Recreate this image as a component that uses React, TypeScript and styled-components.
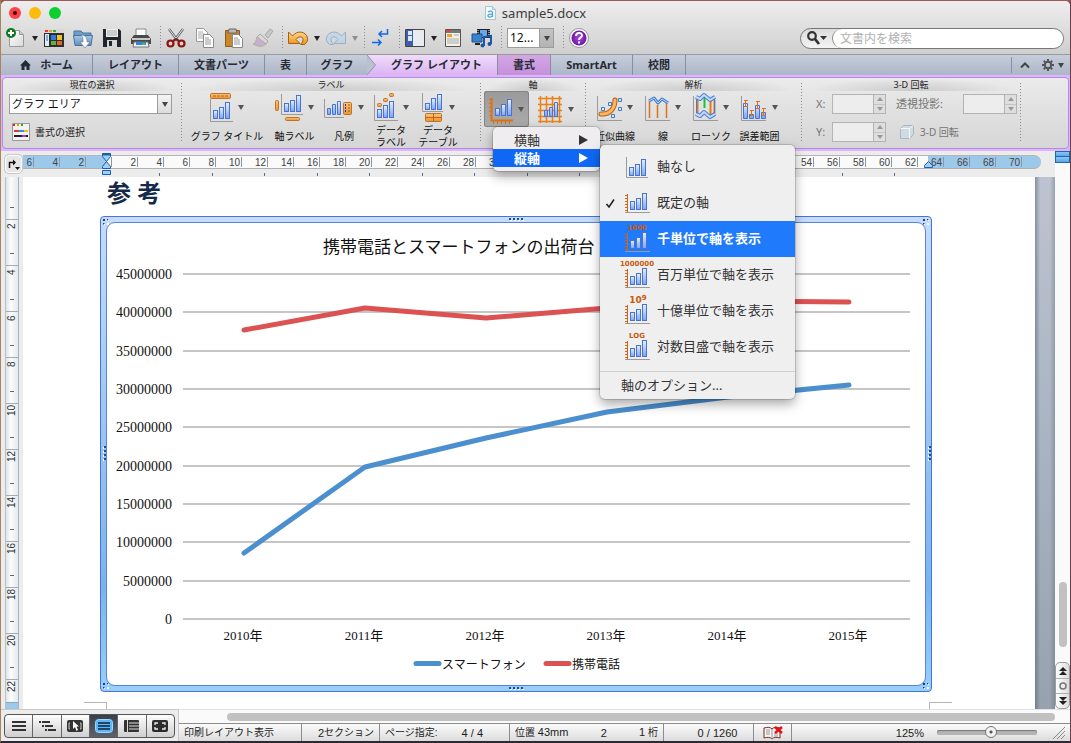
import React from "react";
import styled, { createGlobalStyle } from "styled-components";

const UI = `"Noto Sans", "Noto Sans CJK JP", sans-serif`;
const NUM = `"Liberation Sans", "Noto Sans CJK JP", sans-serif`;
const SERIF = `"Liberation Serif", "Noto Sans CJK JP", serif`;
const PURPLE = "#b888e6";

const Global = createGlobalStyle`
  *, *::before, *::after { box-sizing: border-box; }
  body { margin: 0; background: #3a2c30; font-family: ${UI}; color: #1c1c1c; }
  button, input, select { font: inherit; color: inherit; margin: 0; padding: 0; border: 0; background: none; border-radius: 0; outline: none; }
  svg { display: block; flex: none; overflow: visible; }
`;

/* ---------- window ---------- */

const Desktop = styled.div`
  display: flex;
  min-height: 100vh;
  border-style: solid;
  border-width: 1px 1px 2px 1px;
  border-color: #9a5a58 #6b3c4c #2c2a30 #a9855f;
  background: #8f5656;
`;

const Window = styled.div`
  flex: 1;
  min-width: 0;
  display: flex;
  flex-direction: column;
  border-radius: 5px 5px 0 0;
  background: #ececec;
`;

const Chrome = styled.header`
  background: linear-gradient(#ededed, #e2e2e2 40%, #cfcfcf);
  border-radius: 5px 5px 0 0;
  border-bottom: 1px solid #9a9a9a;
`;

const TitleBar = styled.div`
  display: grid;
  grid-template-columns: 1fr auto 1fr;
  align-items: center;
  height: 23px;
  padding: 0 8px;
`;

const Lights = styled.div`
  display: flex;
  gap: 8px;
`;

const Light = styled.button<{ $c: string }>`
  width: 12px;
  height: 12px;
  border-radius: 50%;
  background: ${(p) => p.$c};
  display: grid;
  place-items: center;
`;

const LightDot = styled.span`
  width: 4px;
  height: 4px;
  border-radius: 50%;
  background: #4d0000;
`;

const FileName = styled.h1`
  display: flex;
  align-items: center;
  gap: 6px;
  margin: 0;
  font-size: 13px;
  line-height: 22px;
  font-weight: 400;
  color: #3c3c3c;
`;

const Toolbar = styled.div`
  display: flex;
  align-items: center;
  height: 30px;
  padding: 0 6px 2px 5px;
`;

const ToolButton = styled.button<{ $tight?: boolean }>`
  width: 20px;
  height: 22px;
  margin-right: ${(p) => (p.$tight ? 0 : 9)}px;
  display: grid;
  place-items: center;
  flex: none;
`;

const DropButton = styled.button<{ $dim?: boolean }>`
  width: 18px;
  height: 22px;
  display: grid;
  place-items: center;
  flex: none;
  opacity: ${(p) => (p.$dim ? 0.4 : 1)};
`;

const Dots = styled.span`
  width: 1px;
  height: 24px;
  margin-right: 5px;
  flex: none;
  background: repeating-linear-gradient(#8e8e8e 0 1px, transparent 1px 3px);
`;

const Spacer = styled.span`
  flex: 1;
`;

const SelectWrap = styled.span<{ $w: number; $zoom?: boolean }>`
  display: flex;
  position: relative;
  width: ${(p) => p.$w}px;
  height: 20px;
  flex: none;
  margin-right: ${(p) => (p.$zoom ? 9 : 0)}px;
  border: 1px solid #9c9c9c;
  background: #fff;
`;

const Select = styled.select<{ $size: number }>`
  appearance: none;
  flex: 1;
  min-width: 0;
  padding-left: 2px;
  font-size: ${(p) => p.$size}px;
  line-height: 18px;
  color: #111;
`;

const SelectArrow = styled.span<{ $dark?: boolean }>`
  width: 14px;
  display: grid;
  place-items: center;
  border-left: 1px solid #9c9c9c;
  background: ${(p) => (p.$dark ? "linear-gradient(#c4c4c4, #b2b2b2)" : "linear-gradient(#f4f4f4, #dcdcdc)")};
  pointer-events: none;
`;

const SearchBox = styled.label`
  display: flex;
  width: 264px;
  height: 21px;
  border: 1px solid #777;
  border-radius: 11px;
  background: linear-gradient(#dcdcdc, #f4f4f4);
  overflow: hidden;
`;

const SearchIcon = styled.span`
  width: 31px;
  display: grid;
  place-items: center;
  flex: none;
`;

const SearchInput = styled.input`
  flex: 1;
  min-width: 0;
  padding-left: 7px;
  background: #fff;
  border-left: 1px solid #8a8a8a;
  border-radius: 10px;
  font-size: 12px;
  &::placeholder { color: #b0b0b0; opacity: 1; }
`;

/* ---------- tabs ---------- */

const Tabs = styled.nav`
  display: flex;
  height: 20px;
  background: linear-gradient(#c6cddb, #adb6c8);
`;

type TabTone = "plain" | "active" | "tinted";

const tabFill: Record<TabTone, string> = {
  plain: "transparent",
  active: "linear-gradient(#efdcfa, #dbb4f2)",
  tinted: "linear-gradient(#d3a8e4, #c590db)",
};

const Tab = styled.button<{ $w: number; $tone?: TabTone; $open?: boolean }>`
  width: ${(p) => p.$w}px;
  display: flex;
  align-items: center;
  justify-content: center;
  gap: 9px;
  flex: none;
  font-size: 11px;
  line-height: 18px;
  font-weight: 700;
  color: #262a33;
  white-space: nowrap;
  background: ${(p) => tabFill[p.$tone ?? "plain"]};
  border-right: ${(p) => (p.$open ? 0 : 1)}px solid #858fa1;
`;

const TabText = styled.span`
  flex: 1;
  margin-left: -9px;
`;

const TabEnd = styled.div`
  display: flex;
  align-items: center;
  gap: 12px;
  padding: 0 6px 0 8px;
  margin: 2px 0;
  border-left: 1px solid #8690a1;
`;

const PlainButton = styled.button`
  display: flex;
  align-items: center;
  gap: 4px;
`;

/* ---------- ribbon ---------- */

const RibbonBand = styled.section`
  padding: 2px 1px;
  background: #dcb8fb;
`;

const Ribbon = styled.div`
  display: flex;
  height: 72px;
  border: 1px solid ${PURPLE};
  border-radius: 4px;
  background: linear-gradient(#ebebeb, #e0e0e0 50%, #d6d6d6);
`;

const Group = styled.div<{ $w: number }>`
  width: ${(p) => p.$w}px;
  flex: none;
`;

const GroupTitle = styled.h2`
  margin: 0 4px;
  height: 13px;
  font-size: 9px;
  line-height: 13px;
  font-weight: 400;
  text-align: center;
  background: radial-gradient(ellipse at 50% 100%, #cbcbcb, transparent 70%);
`;

const GroupDots = styled.span`
  width: 1px;
  margin: 5px 0;
  flex: none;
  background: repeating-linear-gradient(#8e8e8e 0 1px, transparent 1px 3px);
`;

const ToolRow = styled.div<{ $pad: number }>`
  display: flex;
  padding-left: ${(p) => p.$pad}px;
`;

const Tool = styled.div<{ $w: number }>`
  position: relative;
  width: ${(p) => p.$w}px;
  flex: none;
`;

const ToolFace = styled.button<{ $tall?: boolean; $pressed?: boolean }>`
  width: 100%;
  height: ${(p) => (p.$tall ? 36 : 32)}px;
  display: flex;
  align-items: center;
  justify-content: center;
  gap: 5px;
  border-radius: 3px;
  background: ${(p) => (p.$pressed ? "linear-gradient(#9a9a9a, #ababab)" : "none")};
  box-shadow: ${(p) => (p.$pressed ? "inset 0 0 0 1px #858585" : "none")};
`;

const ToolLabel = styled.div<{ $short?: boolean }>`
  height: ${(p) => (p.$short ? 21 : 25)}px;
  display: grid;
  place-items: center;
  font-size: 10px;
  line-height: 12px;
  text-align: center;
  white-space: pre;
  color: #111;
`;

const CurrentSelection = styled.div`
  display: flex;
  flex-direction: column;
  align-items: flex-start;
  gap: 9px;
  padding: 3px 0 0 6px;
`;

const FormatButton = styled.button`
  display: flex;
  align-items: center;
  gap: 5px;
  padding-left: 3px;
  font-size: 10px;
  line-height: 18px;
`;

const Rotation = styled.div`
  display: grid;
  grid-template-columns: 16px 54px 47px 1fr;
  align-items: center;
  column-gap: 0;
  row-gap: 8px;
  padding: 3px 3px 0 14px;
  font-size: 11px;
  line-height: 20px;
  color: #757575;
`;

const RotationLabel = styled.label`
  margin-left: 10px;
  white-space: nowrap;
`;

const RotateButton = styled.button`
  grid-column: 3 / 5;
  display: flex;
  align-items: center;
  gap: 6px;
  margin-left: 14px;
  font-size: 10px;
`;

const StepperBox = styled.span`
  display: flex;
  width: 54px;
  height: 20px;
  justify-self: start;
  border: 1px solid #b3b3b3;
`;

const StepperInput = styled.input`
  flex: 1;
  min-width: 0;
  background: #ededed;
`;

const StepperKeys = styled.span`
  display: grid;
  width: 12px;
  border-left: 1px solid #b3b3b3;
  background: #dedede;
`;

const StepKey = styled.button`
  display: grid;
  place-items: center;
  & + & { border-top: 1px solid #c4c4c4; }
`;

const Flush = styled.div`
  justify-self: end;
`;

/* ---------- menus ---------- */

const menuShadow = "0 0 0 1px rgba(0,0,0,.14), 0 5px 12px rgba(0,0,0,.35)";

const AxisMenu = styled.div`
  position: absolute;
  z-index: 5;
  top: 36px;
  left: 9px;
  width: 107px;
  padding: 4px 0;
  border-radius: 5px;
  background: #efedef;
  box-shadow: ${menuShadow};
`;

const AxisItem = styled.button<{ $on?: boolean }>`
  display: flex;
  align-items: center;
  justify-content: space-between;
  width: 100%;
  height: 18px;
  padding: 0 12px 0 21px;
  font-size: 13px;
  line-height: 16px;
  font-weight: ${(p) => (p.$on ? 700 : 400)};
  color: ${(p) => (p.$on ? "#fff" : "#333")};
  background: ${(p) => (p.$on ? "#0f68f5" : "transparent")};
`;

const SubMenu = styled.div`
  position: absolute;
  z-index: 6;
  top: 18px;
  left: 107px;
  width: 195px;
  padding: 4px 0;
  border-radius: 5px;
  background: #f0eff0;
  box-shadow: ${menuShadow};
`;

const SubItem = styled.button<{ $on?: boolean }>`
  display: grid;
  grid-template-columns: 20px 37px 1fr;
  align-items: center;
  width: 100%;
  height: 36px;
  font-size: 13px;
  text-align: left;
  white-space: nowrap;
  font-weight: ${(p) => (p.$on ? 700 : 400)};
  color: ${(p) => (p.$on ? "#fff" : "#333")};
  background: ${(p) => (p.$on ? "#1f7bfb" : "transparent")};
`;

const SubText = styled.span`
  line-height: 20px;
  padding-bottom: 2px;
`;

const Check = styled.span`
  display: grid;
  place-items: center;
`;

const MenuLine = styled.hr`
  height: 1px;
  margin: 6px 0 3px;
  border: 0;
  background: #d2d2d2;
`;

const OptionItem = styled.button`
  display: block;
  padding-left: 21px;
  font-size: 13px;
  line-height: 20px;
  color: #333;
`;

/* ---------- work area ---------- */

const Body = styled.main`
  flex: 1;
  display: flex;
  min-height: 0;
`;

const Sheet = styled.div`
  flex: 1;
  min-width: 0;
  display: flex;
  flex-direction: column;
`;

const RulerRow = styled.div`
  display: flex;
  height: 26px;
  padding: 4px 14px 0 4px;
  gap: 1px;
`;

const TabStop = styled.button`
  width: 17px;
  height: 18px;
  flex: none;
  display: grid;
  place-items: center;
  border: 1px solid #fff;
  border-radius: 4px;
  background: #e6e6e6;
  box-shadow: 0 0 0 1px #c9c9c9;
`;

const RulerStack = styled.div`
  flex: 1;
  min-width: 0;
  position: relative;
`;

const RulerBar = styled.div`
  display: flex;
  height: 14px;
  border-top: 1px solid #b5b5b5;
  border-bottom: 1px solid #b0b0b0;
  border-radius: 0 7px 7px 0;
  overflow: hidden;
  background: linear-gradient(90deg, #9cc8ea 83px, #fafafa 83px 905px, #9cc8ea 905px);
`;

const RulerCell = styled.span<{ $w: number }>`
  width: ${(p) => p.$w}px;
  flex: none;
  height: 10px;
  margin-top: 1px;
  padding-right: 1px;
  border-right: 1px solid #8c98a6;
  font-family: ${NUM};
  font-size: 10px;
  line-height: 11px;
  text-align: right;
  color: #444;
`;

const RulerTicks = styled.div`
  display: flex;
  justify-content: space-between;
  margin: 4px 146px 0 136px;
`;

const RulerTick = styled.span`
  width: 1px;
  height: 3px;
  background: #5f6d85;
`;

const Marker = styled.span<{ $x: number }>`
  position: absolute;
  top: -2px;
  left: ${(p) => p.$x}px;
`;

const DocRow = styled.div`
  flex: 1;
  display: flex;
  min-height: 0;
`;

const VRuler = styled.div`
  width: 14px;
  margin: 0 4px;
  flex: none;
  display: flex;
  flex-direction: column;
  border-left: 1px solid #b9c0c9;
  border-right: 1px solid #aab2bb;
  background: linear-gradient(90deg, #dfe5ea, #fbfcfc 40%, #e3e9ed);
  overflow: hidden;
`;

const VLead = styled.span`
  height: 42px;
  flex: none;
  padding-top: 30px;
`;

const VCell = styled.span<{ $last?: boolean }>`
  display: flex;
  flex-direction: column;
  align-items: center;
  height: ${(p) => (p.$last ? 23 : 46)}px;
  flex: none;
  border-top: 1px solid #a5abb1;
`;

const VLabel = styled.span`
  height: 12px;
  writing-mode: vertical-rl;
  transform: rotate(180deg);
  font-family: ${NUM};
  font-size: 10px;
  line-height: 12px;
  text-align: center;
  color: #333;
`;

const VDash = styled.span`
  display: block;
  width: 4px;
  height: 1px;
  margin: 21px auto 0;
  background: #666;
`;

const VLeadDash = styled(VDash)`
  margin-top: 0;
`;

const VFoot = styled.span`
  flex: 1;
  min-height: 7px;
  background: #9cc8ea;
  border-top: 1px solid #88a8c4;
`;

const Page = styled.article`
  flex: 1;
  min-width: 0;
  display: flex;
  flex-direction: column;
  background: #fff;
`;

const Heading = styled.h3`
  margin: 0 0 7px 84px;
  height: 32px;
  font-size: 24px;
  line-height: 32px;
  font-weight: 700;
  color: #15294a;
`;

const Frame = styled.figure`
  position: relative;
  margin: 0 103px 0 77px;
  padding: 5px;
  border: 1px solid #4674dc;
  border-radius: 4px;
  background: linear-gradient(#c6dcfa, #7ab4ec 78%, #98d0fa);
`;

const Canvas = styled.div`
  border: 1px solid #5a82e0;
  border-radius: 9px;
  background: #fff;
  & > svg { width: 100%; height: auto; }
`;

const Grip = styled.span<{ $at: string; $turn?: boolean }>`
  position: absolute;
  width: 16px;
  height: 4px;
  background:
    repeating-linear-gradient(90deg, #1d4f86 0 2px, transparent 2px 4px) 0 0 / 100% 2px no-repeat,
    repeating-linear-gradient(90deg, transparent 0 1px, #fff 1px 3px, transparent 3px 4px) 0 2px / 100% 1px no-repeat;
  transform: ${(p) => (p.$turn ? "rotate(90deg)" : "none")};
  ${(p) => p.$at}
`;

const Corner = styled.span<{ $at: string }>`
  position: absolute;
  width: 6px;
  height: 6px;
  border: 2px dotted #1d3f76;
  border-color: #1d3f76 #fff #fff #1d3f76;
  ${(p) => p.$at}
`;

const CropRow = styled.div`
  flex: 1;
  display: flex;
  justify-content: space-between;
  align-items: flex-end;
  padding: 0 83px 0 61px;
`;

const Crop = styled.span<{ $side: "left" | "right" }>`
  width: 23px;
  height: 7px;
  border-top: 1px solid #b5b5b5;
  border-${(p) => p.$side}: 1px solid #b5b5b5;
`;

const Backdrop = styled.div`
  width: 20px;
  flex: none;
  background: linear-gradient(90deg, rgba(70,80,95,.45), transparent 5px 15px, rgba(70,80,95,.3)), linear-gradient(#bcc4d2, #98a2af);
`;

const VScroll = styled.div`
  width: 15px;
  flex: none;
  display: flex;
  flex-direction: column;
  align-items: center;
  background: #fafafa;
`;

const SplitBox = styled.span`
  width: 100%;
  height: 6px;
  border: 1px solid #1e67b4;
  background: linear-gradient(#8fc7f5, #5aa6ea);
  & + & { border-top: 0; }
`;

const Thumb = styled.span`
  width: 8px;
  height: 65px;
  margin: auto 0 15px;
  border-radius: 4px;
  background: #c1c1c1;
`;

const Browse = styled.div`
  width: 100%;
  border: 1px solid #9d9d9d;
  border-radius: 5px;
  background: linear-gradient(90deg, #fff, #dcdcdc);
`;

const BrowseKey = styled.button`
  display: grid;
  place-items: center;
  width: 100%;
  height: 15px;
  & + & { border-top: 1px solid #b0b0b0; }
`;

/* ---------- bottom ---------- */

const Footer = styled.footer`
  display: flex;
  height: 32px;
`;

const Views = styled.div`
  width: 178px;
  flex: none;
  padding: 4px 3px;
  border-top: 1px solid #c8c8c8;
  border-right: 1px solid #c8c8c8;
`;

const ViewSet = styled.div`
  display: flex;
  width: 171px;
  height: 24px;
  border: 1px solid #555;
  border-radius: 4px;
  overflow: hidden;
  background: linear-gradient(#fdfdfd, #cfcfcf);
`;

const ViewButton = styled.button<{ $on?: boolean }>`
  flex: 1;
  display: grid;
  place-items: center;
  background: ${(p) => (p.$on ? "linear-gradient(#3b4048, #5b626c)" : "none")};
  & + & { border-left: 1px solid #666; }
`;

const FootMain = styled.div`
  flex: 1;
  min-width: 0;
  display: flex;
  flex-direction: column;
`;

const HScroll = styled.div`
  height: 15px;
  padding: 3px 15px 0 48px;
  background: #fafafa;
  border-top: 1px solid #e2e2e2;
`;

const HThumb = styled.div`
  height: 8px;
  border-radius: 4px;
  background: #c1c1c1;
`;

const Status = styled.div`
  display: flex;
  flex: 1;
  border-top: 1px solid #8c8c8c;
  background: linear-gradient(#fbfbfb, #dcdcdc);
  font-family: ${NUM};
  font-size: 10px;
  line-height: 16px;
`;

const Cell = styled.div<{ $w?: number; $justify?: string }>`
  display: flex;
  align-items: center;
  justify-content: ${(p) => p.$justify ?? "flex-start"};
  ${(p) => (p.$w ? `width: ${p.$w}px; flex: none; border-right: 1px solid #8c8c8c;` : "flex: 1;")}
  padding: 0 5px;
  white-space: pre;
`;

const Num = styled.span<{ $pre?: number }>`
  margin-left: ${(p) => p.$pre ?? 0}px;
  font-size: 11px;
`;

const ZoomRange = styled.input`
  appearance: none;
  width: 100px;
  height: 12px;
  margin: 0 16px 0 13px;
  &::-webkit-slider-runnable-track {
    height: 5px;
    border-radius: 2px;
    background: #b4b4b4;
    box-shadow: inset 0 1px 1px #777;
  }
  &::-webkit-slider-thumb {
    appearance: none;
    width: 12px;
    height: 12px;
    margin-top: -4px;
    border: 1px solid #777;
    border-radius: 50%;
    background: radial-gradient(circle, #555 0 1px, #f2f2f2 2px);
  }
`;

/* ---------- drawings ---------- */

const Caret = ({ w = 6, c = "#222" }: { w?: number; c?: string }) => (
  <svg width={w} height={w - 1} viewBox="0 0 6 5"><path d="M0 0h6L3 5z" fill={c} /></svg>
);

const Defs = () => (
  <svg width="0" height="0" style={{ position: "absolute" }} aria-hidden="true">
    <defs>
      <linearGradient id="bar" x1="0" x2="0" y1="0" y2="1"><stop offset="0" stopColor="#e6f0ff" /><stop offset="1" stopColor="#78a4f8" /></linearGradient>
      <linearGradient id="org" x1="0" x2="0" y1="0" y2="1"><stop offset="0" stopColor="#fbc47c" /><stop offset="1" stopColor="#ee9432" /></linearGradient>
      <linearGradient id="undo" x1="0" x2="0" y1="0" y2="1"><stop offset="0" stopColor="#ffd98c" /><stop offset="1" stopColor="#f0901c" /></linearGradient>
      <linearGradient id="blue" x1="0" x2="0" y1="0" y2="1"><stop offset="0" stopColor="#a8c8e4" /><stop offset="1" stopColor="#5d8fbe" /></linearGradient>
      <linearGradient id="paper" x1="0" x2="1" y1="0" y2="1"><stop offset="0" stopColor="#fff" /><stop offset="1" stopColor="#d8d8d8" /></linearGradient>
      <radialGradient id="help"><stop offset="0" stopColor="#b04be0" /><stop offset="1" stopColor="#6d16a4" /></radialGradient>
    </defs>
  </svg>
);

/* three rising bars standing on the point (x, y) */
const Bars = ({ x, y, h = [9, 12, 17] }: { x: number; y: number; h?: number[] }) => (
  <g fill="url(#bar)" stroke="#4a72d0">
    {h.map((v, i) => <rect key={i} x={x + i * 6 + 0.5} y={y - v + 0.5} width="4" height={v - 1} />)}
  </g>
);

const Axis = ({ x = 1, t = 6, b = 28, r = 23 }: { x?: number; t?: number; b?: number; r?: number }) => (
  <path d={`M${x + 0.5} ${t}V${b + 0.5}H${r}`} fill="none" stroke="#9a9a9a" />
);

const Block = ({ x, y, w, h }: { x: number; y: number; w: number; h: number }) => (
  <rect x={x + 0.5} y={y + 0.5} width={w - 1} height={h - 1} rx="1" fill="url(#org)" stroke="#c07020" />
);

const art: Record<string, { w: number; el: React.ReactNode }> = {
  title: { w: 23, el: <><Axis t={7} b={29} x={0} /><Bars x={3} y={27} /><Block x={0} y={1} w={21} h={6} /><path d="M3 4h15" stroke="#b06420" strokeDasharray="3 1" /></> },
  axisLabel: { w: 28, el: <><Axis x={6} t={2} b={22} r={28} /><Bars x={9} y={20} /><Block x={0} y={8} w={4} h={11} /><Block x={10} y={25} w={15} h={4} /></> },
  legend: { w: 29, el: <><Axis x={0} t={7} b={25} r={20} /><g fill="url(#bar)" stroke="#4a72d0"><path d="M3.500 16.500h3v6h-3zM8.500 12.500h3v10h-3zM13.500 9.500h3v13h-3z" /></g><Block x={19} y={10} w={9} h={13} /><path d="M21 13h1M21 16h1M21 19h1" stroke="#1d39c9" strokeWidth="2" /><path d="M24 13h2M24 16h2M24 19h2" stroke="#9c4c10" /></> },
  dataLabel: { w: 24, el: <><Axis x={0} t={3} b={28} r={24} /><Bars x={3} y={26} h={[9, 13, 17]} /><Block x={3} y={11} w={5} h={4} /><Block x={9} y={6} w={5} h={4} /><Block x={15} y={1} w={5} h={4} /></> },
  dataTable: { w: 22, el: <><Axis x={0} t={1} b={19} r={21} /><Bars x={3} y={18} h={[7, 12, 16]} /><Block x={3} y={21} w={17} h={9} /><path d="M4 25.500h15M11.500 22v7" stroke="#b8641a" /></> },
  axis: { w: 24, el: <><path d="M2.500 4v22.500H24" fill="none" stroke="#e07010" strokeWidth="2" /><path d="M0 5.500h2M0 9.500h2M0 13.500h2M0 17.500h2M0 21.500h2M4.500 27v3M8.500 27v3M12.500 27v3M16.500 27v3M20.500 27v3" stroke="#e07010" /><Bars x={6} y={22} h={[8, 12, 17]} /></> },
  grid: { w: 25, el: <><g stroke="#e98118" strokeWidth="1.500"><path d="M0 4.500h24M0 10.500h24M0 16.500h24M0 22.500h24M0 27.500h24M2.500 2v27M8.500 2v27M14.500 2v27M21.500 2v27" /></g><g fill="url(#bar)" stroke="#4a72d0"><path d="M6.500 16.500h3v6h-3zM11.500 13.500h3v9h-3zM16.500 8.500h3v14h-3z" /></g></> },
  trend: { w: 25, el: <><Axis x={0} t={4} b={28} r={25} /><path d="M4 22C12 23 18 17 18 8" fill="none" stroke="#b85c10" strokeWidth="5" strokeLinecap="round" /><path d="M4 22C12 23 18 17 18 8" fill="none" stroke="#fbb860" strokeWidth="3" strokeLinecap="round" /><g fill="#d8eaff" stroke="#3b7cc4"><path d="M4.500 15.500h3v3h-3zM11.500 10.500h3v3h-3zM14.500 22.500h3v3h-3zM21.500 15.500h3v3h-3zM21.500 6.500h3v3h-3z" /></g></> },
  lines: { w: 25, el: <><Axis x={0} t={4} b={28} r={25} /><path d="M4.500 9v17M12.500 13v13M21.500 11v15" stroke="#d9701a" strokeWidth="1.500" /><path d="M4 9l5-3 4 5 4-4 6 4" fill="none" stroke="#4a7cd0" strokeWidth="3" strokeLinejoin="round" /><path d="M4 9l5-3 4 5 4-4 6 4" fill="none" stroke="#bcd8ff" /></> },
  candle: { w: 25, el: <><Axis x={0} t={4} b={28} r={25} /><path d="M4.500 6v17M17.500 8v15M21.500 8v14" stroke="#e07a1a" strokeWidth="2" /><path d="M11.500 4v12" stroke="#12c832" strokeWidth="2" /><g fill="none" strokeLinejoin="round"><path d="M3 5l4 2 4-4 6 5 5-3M3 22l4 2 4-4 6 5 5-3" stroke="#4a7cd0" strokeWidth="4" /><path d="M3.500 5v17M21.500 5v17" stroke="#4a7cd0" /><path d="M3 5l4 2 4-4 6 5 5-3M3 22l4 2 4-4 6 5 5-3" stroke="#c4dcff" strokeWidth="2" /></g></> },
  errorBars: { w: 26, el: <><Axis x={0} t={4} b={28} r={25} /><g fill="url(#bar)" stroke="#4a72d0"><path d="M2.500 11.500h4v15h-4zM8.500 22.500h4v4h-4zM14.500 13.500h4v13h-4zM20.500 20.500h4v6h-4z" /></g><path d="M4.500 8v7M3 8.500h4M3 14.500h4M10.500 18v6M9 18.500h4M9 23.500h4M16.500 9v8M15 9.500h4M15 16.500h4M22.500 16v8M21 16.500h4M21 23.500h4" stroke="#e07010" /></> },
};

const Art = ({ name }: { name: string }) => (
  <svg width={art[name].w} height="30" viewBox={`0 0 ${art[name].w} 30`}>{art[name].el}</svg>
);

const MenuArt = ({ tag, plain }: { tag?: string; plain?: boolean }) => (
  <svg width="34" height="36" viewBox="0 0 34 36" fontFamily="DejaVu Sans" fontWeight="700" fill="#c85a0c">
    <g transform={tag ? "translate(0 3)" : undefined}>
      {plain ? <path d="M6.500 8v20.500H28" fill="none" stroke="#9a9a9a" /> : (
        <>
          <path d="M5 27.500H30" stroke="#9a9a9a" />
          <path d="M7.500 9v18.500" stroke="#d06414" />
          <path d="M5 10.500h2M5 13.500h2M5 16.500h2M5 19.500h2M5 22.500h2M5 25.500h2" stroke="#d06414" />
        </>
      )}
      <Bars x={plain ? 9 : 10} y={plain ? 27 : 25} />
    </g>
    {tag === "10" ? (
      <text x="18" y="10" textAnchor="middle" fontSize="9">10<tspan dy="-3" fontSize="7">9</tspan></text>
    ) : (
      <text x="17" y="9" textAnchor="middle" fontSize="7">{tag}</text>
    )}
  </svg>
);

const I = ({ children }: { children: React.ReactNode }) => <svg width="20" height="20" viewBox="0 0 20 20">{children}</svg>;

const NewIcon = () => <I><path d="M3.500 2.500h10l4 4v12h-14z" fill="url(#paper)" stroke="#999" /><path d="M13.500 2.500v4h4" fill="#ccc" stroke="#999" /><circle cx="5" cy="5" r="5" fill="#0d7a22" /><path d="M5 2v6M2 5h6" stroke="#fff" strokeWidth="2" /></I>;
const GalleryIcon = () => <I><path d="M0 1h20v18H0z" fill="#2e2e2e" /><path d="M0 1h20v4H0z" fill="#d8d8d8" /><path d="M1 2h3v2H1z" fill="#e33" /><path d="M5 2h3v2H5z" fill="#e8a020" /><path d="M9 2h3v2H9z" fill="#3a3" /><path d="M1 6h4v12H1z" fill="#dfeaf8" /><path d="M2 8h2M2 10h2M2 12h2" stroke="#2a68c0" /><path d="M7 7h5v5H7z" fill="#2d7be0" /><path d="M13 7h5v5h-5z" fill="#f3c32a" /><path d="M7 13h5v4H7z" fill="#5fb53a" /><path d="M13 13h5v4h-5z" fill="#e8632a" /></I>;
const OpenIcon = () => <I><path d="M1 3h7l2 2h8v4H1z" fill="#6d9cc8" stroke="#47749f" /><path d="M.5 7.500h19l-1.500 10H2z" fill="url(#blue)" stroke="#47749f" /><path d="M8 7c5 0 6 3 6 7h3l-5 6-5-6h3c0-3 0-5-2-7z" fill="#fff" stroke="#678" strokeWidth=".6" /></I>;
const SaveIcon = () => <I><path d="M1 1h16l2 2v16H1z" fill="#22252b" /><path d="M4 1h12v8H4z" fill="#eee" /><path d="M5 3h10M5 5h10M5 7h10" stroke="#aaa" /><path d="M5 12h10v7H5z" fill="#d6d6d6" /><path d="M7 13h3v5H7z" fill="#22252b" /></I>;
const PrintIcon = () => <I><path d="M5 1h10v8H5z" fill="#fff" stroke="#888" /><path d="M3 7h14l3 4v5H0v-5z" fill="#4a4a4a" /><path d="M1 10h18v2H1z" fill="#c8c8c8" /><path d="M3 14h14l1 5H2z" fill="#f2f2f2" stroke="#777" /><path d="M5 14h10v3H5z" fill="#2c86dc" /><path d="M11 15h3v2h-3z" fill="#54b848" /></I>;
const CutIcon = () => <I><path d="M3 1l9 12M17 1L8 13" stroke="#666" strokeWidth="2.500" /><path d="M3 1l9 12M17 1L8 13" stroke="#e2e2e2" /><circle cx="4.500" cy="15.500" r="3" fill="none" stroke="#8e1414" strokeWidth="2.200" /><circle cx="15.500" cy="15.500" r="3" fill="none" stroke="#8e1414" strokeWidth="2.200" /><path d="M7 13l3-2 3 2" stroke="#8e1414" strokeWidth="2" fill="none" /></I>;
const CopyIcon = () => <I><path d="M1.500 .5h7l4 4v9h-11z" fill="#fff" stroke="#999" /><path d="M3 4h5M3 6h7M3 8h7M3 10h7" stroke="#aaa" /><path d="M8.500 6.500h6l4 4v9h-10z" fill="#fff" stroke="#8a8a8a" /><path d="M10 10h4M10 12h6M10 14h6M10 16h6" stroke="#999" /></I>;
const PasteIcon = () => <I><path d="M1.500 2.500h14v16h-14z" fill="#c8862e" stroke="#8f5a18" /><path d="M5 1h7l1 4H4z" fill="#bbb" stroke="#666" /><path d="M8.500 6.500h6l4 4v9h-10z" fill="#fff" stroke="#8a8a8a" /><path d="M10 10h4M10 12h6M10 14h6M10 16h6" stroke="#999" /></I>;
const BrushIcon = () => <I><g opacity=".6"><path d="M12 7l5-6 3 2-5 7z" fill="#bbb" stroke="#888" /><path d="M7 6l8 7-2 3-9-7z" fill="#d9d9d9" stroke="#888" /><path d="M4 9l9 7c-3 3-8 3-13 0 3-1 3-4 4-7z" fill="#b79bd0" stroke="#b08a78" /></g></I>;
const UndoIcon = () => <I><path d="M.5 4v11.500H12L8 11.500C10 8 15 8 15 11.500c0 2-1 3.500-2.500 5h4C19 14.500 20 12.500 19.500 10 18 3 9 2 4.500 8z" fill="url(#undo)" stroke="#a8600c" strokeLinejoin="round" /></I>;
const RedoIcon = () => <I><path transform="matrix(-1 0 0 1 20 0)" opacity=".55" d="M.5 4v11.500H12L8 11.500C10 8 15 8 15 11.500c0 2-1 3.500-2.500 5h4C19 14.500 20 12.500 19.500 10 18 3 9 2 4.500 8z" fill="#b9d4ea" stroke="#5c93bf" strokeLinejoin="round" /></I>;
const MarksIcon = () => <I><g fill="none" stroke="#1468e8" strokeWidth="1.500"><path d="M17.500 1v5H9M12 3L9 6l3 3M2 14.500h9M8 11.500l3 3-3 3" /></g></I>;
const SideIcon = () => <I><path d="M.5 1.500h19v17H.5z" fill="#e9ebf2" stroke="#444" /><path d="M1 2h7v16H1z" fill="#3c5fa8" /><path d="M3 3h4v4H3zM3 8h4v5H3z" fill="#dce6fa" /></I>;
const ToolboxIcon = () => <I><path d="M2.500 1.500h15v17h-15z" fill="#f2f0e6" stroke="#555" /><path d="M3 2h14v3H3z" fill="#777" /><path d="M4 3h3" stroke="#f33" strokeWidth="2" /><path d="M4 6h5v3H4z" fill="#f0a030" /><path d="M11 7h5M4 11h12M4 13h12M4 15h12" stroke="#aaa" /></I>;
const MediaIcon = () => <I><path d="M5 1h13v9H5z" fill="#222" /><path d="M8 2h7v7H8z" fill="#69a8e8" /><path d="M6 2v7M17 2v7" stroke="#eee" strokeDasharray="1 1" /><path d="M0 6h10v8H0z" fill="#3b82cc" stroke="#1c4f8e" /><path d="M3 15h5v2H3z" fill="#222" /><path d="M12 18V9l7-1v8" fill="none" stroke="#1a56a8" strokeWidth="2" /><circle cx="10.500" cy="17.500" r="2" fill="#1a56a8" /><circle cx="17.500" cy="16" r="2" fill="#1a56a8" /></I>;
const HelpIcon = () => <I><circle cx="10" cy="10" r="9.500" fill="#fafafa" stroke="#999" /><circle cx="10" cy="10" r="7.500" fill="url(#help)" /><path d="M7 8c0-4 6-4 6-.5 0 2-3 2-3 4.500M10 13.500v2" stroke="#fff" strokeWidth="2" fill="none" /></I>;

const years = ["2010年", "2011年", "2012年", "2013年", "2014年", "2015年"];
const levels = [45, 40, 35, 30, 25, 20, 15, 10, 5, 0];

const Chart = () => (
  <svg viewBox="0 0 818 462" role="img" aria-label="携帯電話とスマートフォンの出荷台" fontFamily={SERIF} fontSize="14" fill="#111">
    <text x="216" y="30" fontSize="17">携帯電話とスマートフォンの出荷台</text>
    {levels.map((v, i) => {
      const y = Math.round(51 + i * 38.33);
      return (
        <g key={v}>
          <path d={`M76 ${y}H803`} stroke="#c6c6c6" strokeWidth="2" />
          <text x="65" y={y + 5} textAnchor="end">{v ? `${v}000000` : "0"}</text>
        </g>
      );
    })}
    <g fill="none" strokeWidth="5" strokeLinecap="round" strokeLinejoin="round">
      <path d="M137 107L258 85L379 95L500 85L621 78L742 79" stroke="#dc5252" />
      <path d="M137 330L258 244L379 215L500 189L621 174L742 162" stroke="#4b8fce" />
      <path d="M309 440.500H332" stroke="#4b8fce" />
      <path d="M439 440.500H462" stroke="#dc5252" />
    </g>
    {years.map((t, i) => <text key={t} x={136 + i * 121} y="417" fontSize="13" textAnchor="middle">{t}</text>)}
    <text x="335" y="446" fontSize="12">スマートフォン</text>
    <text x="465" y="446" fontSize="12">携帯電話</text>
  </svg>
);

/* ---------- composed parts ---------- */

const RibbonTool = ({ w, name, label }: { w: number; name: string; label: string }) => (
  <Tool $w={w}>
    <ToolFace aria-label={label}><Art name={name} /><Caret w={6} c="#555" /></ToolFace>
    <ToolLabel>{label}</ToolLabel>
  </Tool>
);

const Stepper = ({ id }: { id: string }) => (
  <StepperBox>
    <StepperInput id={id} type="text" disabled />
    <StepperKeys>
      <StepKey disabled aria-label="増やす"><svg width="6" height="4" viewBox="0 0 6 4"><path d="M0 4h6L3 0z" fill="#999" /></svg></StepKey>
      <StepKey disabled aria-label="減らす"><svg width="6" height="4" viewBox="0 0 6 4"><path d="M0 0h6L3 4z" fill="#999" /></svg></StepKey>
    </StepperKeys>
  </StepperBox>
);

const subItems = [
  { text: "軸なし", plain: true },
  { text: "既定の軸", checked: true },
  { text: "千単位で軸を表示", tag: "1000", on: true },
  { text: "百万単位で軸を表示", tag: "1000000" },
  { text: "十億単位で軸を表示", tag: "10" },
  { text: "対数目盛で軸を表示", tag: "LOG" },
];

const Play = ({ c }: { c: string }) => <svg width="9" height="10" viewBox="0 0 9 10"><path d="M0 0v10l9-5z" fill={c} /></svg>;

const Menus = () => (
  <AxisMenu role="menu">
    <AxisItem role="menuitem">横軸<Play c="#333" /></AxisItem>
    <AxisItem role="menuitem" $on>縦軸<Play c="#fff" /></AxisItem>
    <SubMenu role="menu">
      {subItems.map((s) => (
        <SubItem key={s.text} role="menuitem" $on={s.on}>
          <Check>{s.checked && <svg width="9" height="9" viewBox="0 0 9 9"><path d="M.5 5l2.500 3L8 .5" fill="none" stroke="#222" strokeWidth="1.600" /></svg>}</Check>
          <MenuArt tag={s.tag} plain={s.plain} />
          <SubText>{s.text}</SubText>
        </SubItem>
      ))}
      <MenuLine />
      <OptionItem role="menuitem">軸のオプション...</OptionItem>
    </SubMenu>
  </AxisMenu>
);

const rulerValues = Array.from({ length: 35 }, (_, i) => (i + 1) * 2);

export default function App() {
  return (
    <Desktop>
      <Global />
      <Defs />
      <Window>
        <Chrome>
          <TitleBar>
            <Lights>
              <Light $c="#fc4448" aria-label="閉じる"><LightDot /></Light>
              <Light $c="#fdbc0b" aria-label="しまう" />
              <Light $c="#0fcf30" aria-label="拡大" />
            </Lights>
            <FileName>
              <svg width="11" height="14" viewBox="0 0 11 14"><path d="M.5 .5h7l3 3v10H.5z" fill="#f3fafe" stroke="#a9c4d4" /><path d="M7.500 .5v3h3" fill="#cfe3ee" stroke="#a9c4d4" /><path d="M3 6c2-1.500 4.500-1 4.500 1v4M7.500 8.500c-3-1-5 0-4.500 1.500s3.500 1.500 4.500-.5" fill="none" stroke="#55a5d6" strokeWidth="1.300" /></svg>
              sample5.docx
            </FileName>
          </TitleBar>
          <Toolbar>
            <ToolButton $tight aria-label="新規"><NewIcon /></ToolButton>
            <DropButton aria-label="新規の種類"><Caret /></DropButton>
            <ToolButton aria-label="ギャラリー"><GalleryIcon /></ToolButton>
            <ToolButton aria-label="開く"><OpenIcon /></ToolButton>
            <ToolButton aria-label="保存"><SaveIcon /></ToolButton>
            <ToolButton aria-label="印刷"><PrintIcon /></ToolButton>
            <Dots />
            <ToolButton aria-label="切り取り"><CutIcon /></ToolButton>
            <ToolButton aria-label="コピー"><CopyIcon /></ToolButton>
            <ToolButton aria-label="貼り付け"><PasteIcon /></ToolButton>
            <ToolButton aria-label="書式のコピー"><BrushIcon /></ToolButton>
            <Dots />
            <ToolButton $tight aria-label="元に戻す"><UndoIcon /></ToolButton>
            <DropButton aria-label="元に戻す履歴"><Caret /></DropButton>
            <ToolButton $tight aria-label="やり直し"><RedoIcon /></ToolButton>
            <DropButton $dim aria-label="やり直し履歴"><Caret /></DropButton>
            <Dots />
            <ToolButton aria-label="編集記号"><MarksIcon /></ToolButton>
            <Dots />
            <ToolButton $tight aria-label="サイドバー"><SideIcon /></ToolButton>
            <DropButton aria-label="サイドバーの種類"><Caret /></DropButton>
            <ToolButton aria-label="ツールボックス"><ToolboxIcon /></ToolButton>
            <ToolButton aria-label="メディア"><MediaIcon /></ToolButton>
            <Dots />
            <SelectWrap $w={47} $zoom>
              <Select $size={12} aria-label="ズーム" defaultValue="125"><option value="125">12...</option></Select>
              <SelectArrow $dark><Caret c="#444" /></SelectArrow>
            </SelectWrap>
            <Dots />
            <ToolButton aria-label="ヘルプ"><HelpIcon /></ToolButton>
            <Spacer />
            <SearchBox>
              <SearchIcon><svg width="20" height="14" viewBox="0 0 20 14"><circle cx="5" cy="5" r="3.800" fill="none" stroke="#333" strokeWidth="2.200" /><path d="M8 8l4 5" stroke="#333" strokeWidth="2.800" /><path d="M13 5h7l-3.500 4z" fill="#333" /></svg></SearchIcon>
              <SearchInput type="search" placeholder="文書内を検索" aria-label="文書内を検索" />
            </SearchBox>
          </Toolbar>
        </Chrome>

        <Tabs>
          <Tab $w={92}>
            <svg width="11" height="10" viewBox="0 0 11 10"><path d="M5.500 0L11 5.500H9.500V10h-3V6.500h-2V10h-3V5.500H0z" fill="#262a33" /></svg>
            ホーム
          </Tab>
          <Tab $w={86}>レイアウト</Tab>
          <Tab $w={86}>文書パーツ</Tab>
          <Tab $w={42}>表</Tab>
          <Tab $w={60} $open>グラフ</Tab>
          <Tab $w={131} $tone="active">
            <svg width="9" height="20" viewBox="0 0 9 20"><path d="M0 0l8.500 10L0 20z" fill="#b9c1d0" /><path d="M0 0l8.500 10L0 20" fill="none" stroke="#9a8fb4" /></svg>
            <TabText>グラフ レイアウト</TabText>
          </Tab>
          <Tab $w={53} $tone="tinted">書式</Tab>
          <Tab $w={82}>SmartArt</Tab>
          <Tab $w={53}>校閲</Tab>
          <Spacer />
          <TabEnd>
            <PlainButton aria-label="リボンを閉じる"><svg width="10" height="6" viewBox="0 0 10 6"><path d="M1 5.500L5 1.500l4 4" fill="none" stroke="#444" strokeWidth="2" /></svg></PlainButton>
            <PlainButton aria-label="設定">
              <svg width="12" height="12" viewBox="0 0 12 12"><circle cx="6" cy="6" r="3.200" fill="none" stroke="#555" strokeWidth="2" /><path d="M6 0v2M6 10v2M0 6h2M10 6h2M1.800 1.800l1.400 1.400M8.800 8.800l1.400 1.400M10.200 1.800L8.800 3.200M3.200 8.800l-1.400 1.400" stroke="#555" strokeWidth="2" /></svg>
              <Caret c="#444" />
            </PlainButton>
          </TabEnd>
        </Tabs>

        <RibbonBand>
          <Ribbon>
            <Group $w={178}>
              <GroupTitle>現在の選択</GroupTitle>
              <CurrentSelection>
                <SelectWrap $w={163}>
                  <Select $size={11} aria-label="グラフ要素"><option>グラフ エリア</option></Select>
                  <SelectArrow><Caret c="#444" /></SelectArrow>
                </SelectWrap>
                <FormatButton>
                  <svg width="18" height="18" viewBox="0 0 18 18"><path d="M.5 .5h17v17H.5z" fill="#f2f2f2" stroke="#999" /><path d="M1 2h2" stroke="#e22" strokeWidth="2" /><path d="M5 2h2" stroke="#e90" strokeWidth="2" /><path d="M9 2h2" stroke="#2a2" strokeWidth="2" /><path d="M2 8h5" stroke="#e33" strokeWidth="2" /><path d="M7 8h5" stroke="#3a8ae8" strokeWidth="2" /><path d="M12 8h4" stroke="#eac12a" strokeWidth="2" /><path d="M2 13h14" stroke="#222" strokeWidth="2" /><path d="M10 13h4" stroke="#a43ad0" strokeWidth="2" /></svg>
                  書式の選択
                </FormatButton>
              </CurrentSelection>
            </Group>
            <GroupDots />
            <Group $w={298}>
              <GroupTitle>ラベル</GroupTitle>
              <ToolRow $pad={4}>
                <RibbonTool w={82} name="title" label="グラフ タイトル" />
                <RibbonTool w={53} name="axisLabel" label="軸ラベル" />
                <RibbonTool w={46} name="legend" label="凡例" />
                <RibbonTool w={48} name="dataLabel" label={"データ\nラベル"} />
                <RibbonTool w={46} name="dataTable" label={"データ\nテーブル"} />
              </ToolRow>
            </Group>
            <GroupDots />
            <Group $w={104}>
              <GroupTitle>軸</GroupTitle>
              <ToolRow $pad={3}>
                <Tool $w={45}>
                  <ToolFace $tall $pressed aria-label="軸" aria-expanded="true"><Art name="axis" /><Caret c="#555" /></ToolFace>
                  <ToolLabel $short>軸</ToolLabel>
                  <Menus />
                </Tool>
                <Tool $w={54}>
                  <ToolFace $tall aria-label="目盛線"><Art name="grid" /><Caret c="#555" /></ToolFace>
                  <ToolLabel $short>目盛線</ToolLabel>
                </Tool>
              </ToolRow>
            </Group>
            <GroupDots />
            <Group $w={215}>
              <GroupTitle>解析</GroupTitle>
              <ToolRow $pad={5}>
                <RibbonTool w={48} name="trend" label="近似曲線" />
                <RibbonTool w={48} name="lines" label="線" />
                <RibbonTool w={48} name="candle" label="ローソク" />
                <RibbonTool w={49} name="errorBars" label="誤差範囲" />
              </ToolRow>
            </Group>
            <GroupDots />
            <Group $w={218}>
              <GroupTitle>3-D 回転</GroupTitle>
              <Rotation>
                <label htmlFor="rx">X:</label>
                <Stepper id="rx" />
                <RotationLabel htmlFor="rp">透視投影:</RotationLabel>
                <Flush><Stepper id="rp" /></Flush>
                <label htmlFor="ry">Y:</label>
                <Stepper id="ry" />
                <RotateButton disabled>
                  <svg width="14" height="14" viewBox="0 0 14 14"><path d="M.5 3.500l3-3h10v9l-4 4h-9z" fill="#d0dae2" stroke="#a9b7c2" /><path d="M.5 3.500h9v10M9.500 3.500l4-3" fill="none" stroke="#f4f8fa" /></svg>
                  3-D 回転
                </RotateButton>
              </Rotation>
            </Group>
            <GroupDots />
          </Ribbon>
        </RibbonBand>

        <Body>
          <Sheet>
            <RulerRow>
              <TabStop aria-label="タブの種類"><svg width="12" height="12" viewBox="0 0 12 12"><path d="M1.500 10V4.500H7" fill="none" stroke="#111" strokeWidth="1.500" /><path d="M5 1.500l3 3-3 3z" fill="#111" /><path d="M7 9h5l-2.500 3z" fill="#111" /></svg></TabStop>
              <RulerStack>
                <RulerBar>
                  <RulerCell $w={11}>6</RulerCell>
                  <RulerCell $w={26}>4</RulerCell>
                  <RulerCell $w={26}>2</RulerCell>
                  <RulerCell $w={26} />
                  {rulerValues.map((v) => <RulerCell key={v} $w={26}>{v}</RulerCell>)}
                </RulerBar>
                <RulerTicks>{Array.from({ length: 15 }, (_, i) => <RulerTick key={i} />)}</RulerTicks>
                <Marker $x={79}><svg width="9" height="22" viewBox="0 0 9 22"><path d="M.5 .5h8v3l-4 5 4 5v2h-8v-2l4-5-4-5zM.5 17.500h8v4h-8z" fill="#9fd0f8" stroke="#1c5fae" /><path d="M0 1.500h9" stroke="#1c5fae" strokeWidth="2" /></svg></Marker>
                <Marker $x={901}><svg width="9" height="15" viewBox="0 0 9 15"><path d="M4.500 8.500l4 4v2h-8v-2z" fill="#9fd0f8" stroke="#1c5fae" /></svg></Marker>
              </RulerStack>
            </RulerRow>
            <DocRow>
              <VRuler>
                <VLead><VLeadDash /></VLead>
                {rulerValues.slice(0, 10).map((v) => <VCell key={v}><VLabel>{v}</VLabel><VDash /></VCell>)}
                <VCell $last><VLabel>22</VLabel></VCell>
                <VFoot />
              </VRuler>
              <Page>
                <Heading>参 考</Heading>
                <Frame>
                  <Canvas><Chart /></Canvas>
                  <Grip $at="top: 1px; left: calc(50% - 7px);" />
                  <Grip $at="bottom: 0; left: calc(50% - 7px);" />
                  <Grip $turn $at="left: -5px; top: calc(50% - 2px);" />
                  <Grip $turn $at="right: -6px; top: calc(50% - 2px);" />
                  <Corner $at="top: 2px; left: 2px;" />
                  <Corner $at="top: 2px; right: 2px;" />
                  <Corner $at="bottom: 2px; left: 2px;" />
                  <Corner $at="bottom: 2px; right: 2px;" />
                </Frame>
                <CropRow><Crop $side="right" /><Crop $side="left" /></CropRow>
              </Page>
              <Backdrop />
            </DocRow>
          </Sheet>
          <VScroll>
            <SplitBox />
            <SplitBox />
            <Thumb />
            <Browse>
              <BrowseKey aria-label="前へ"><svg width="8" height="8" viewBox="0 0 8 8"><path d="M4 0l4 4H0zM4 4l4 4H0z" fill="#222" /></svg></BrowseKey>
              <BrowseKey aria-label="選択"><svg width="8" height="8" viewBox="0 0 8 8"><circle cx="4" cy="4" r="3" fill="#eee" stroke="#777" strokeWidth="1.500" /></svg></BrowseKey>
              <BrowseKey aria-label="次へ"><svg width="8" height="8" viewBox="0 0 8 8"><path d="M4 4l4-4H0zM4 8l4-4H0z" fill="#222" /></svg></BrowseKey>
            </Browse>
          </VScroll>
        </Body>

        <Footer>
          <Views>
            <ViewSet>
              <ViewButton aria-label="下書き"><svg width="14" height="10" viewBox="0 0 14 10"><path d="M0 1h14M0 5h14M0 9h14" stroke="#333" strokeWidth="2" /></svg></ViewButton>
              <ViewButton aria-label="アウトライン"><svg width="16" height="10" viewBox="0 0 16 10"><path d="M0 1h2M3 1h8M3 5h2M6 5h8M6 9h2M9 9h8" stroke="#333" strokeWidth="2" /></svg></ViewButton>
              <ViewButton aria-label="発行レイアウト"><svg width="16" height="12" viewBox="0 0 16 12"><rect width="16" height="12" rx="2" fill="#333" /><path d="M3 3H2v6h1M13 3h1v6h-1" stroke="#ccc" fill="none" /><path d="M6 1v8l2-2 1.500 4 1.500-1-1.500-3.500H12z" fill="#fff" /></svg></ViewButton>
              <ViewButton $on aria-label="印刷レイアウト"><svg width="18" height="14" viewBox="0 0 18 14"><rect x=".5" y=".5" width="17" height="13" rx="3" fill="#5db7fa" stroke="#9dd6ff" /><path d="M3 4h12M3 7h12M3 10h12" stroke="#123" strokeWidth="1.300" /></svg></ViewButton>
              <ViewButton aria-label="ノート"><svg width="15" height="12" viewBox="0 0 15 12"><rect width="15" height="12" rx="1" fill="#333" /><path d="M3.500 0v12M5 3h10M5 6h10M5 9h10" stroke="#ddd" /></svg></ViewButton>
              <ViewButton aria-label="全画面"><svg width="16" height="12" viewBox="0 0 16 12"><rect width="16" height="12" rx="2" fill="#2c2c2c" /><path d="M3 5V3h3M10 3h3v2M13 7v2h-3M6 9H3V7" fill="none" stroke="#eee" strokeWidth="1.300" /></svg></ViewButton>
            </ViewSet>
          </Views>
          <FootMain>
            <HScroll><HThumb /></HScroll>
            <Status>
              <Cell $w={123}>印刷レイアウト表示</Cell>
              <Cell $w={78} $justify="flex-end"><Num>2</Num>セクション</Cell>
              <Cell $w={130}>ページ指定:<Num $pre={24}>4 / 4</Num></Cell>
              <Cell $w={154} $justify="space-between"><span>位置 <Num>43mm</Num></span><Num>2</Num><span><Num>1</Num> 桁</span></Cell>
              <Cell $w={90} $justify="center"><Num $pre={18}>0 / 1260</Num></Cell>
              <Cell $w={38} $justify="center"><svg width="20" height="14" viewBox="0 0 20 14"><path d="M1 2c4-1 6-1 8 1 2-2 4-2 8-1v10c-4-1-6-1-8 1-2-2-4-2-8-1z" fill="#f4f4f4" stroke="#7a2a1a" /><path d="M9 3v10M3 4h4M3 6h4M3 8h4M11 8h4M11 10h4" stroke="#999" /><path d="M12 1l7 6M19 1l-7 6" stroke="#e81010" strokeWidth="2.500" /></svg></Cell>
              <Cell $justify="flex-end">
                <Num>125%</Num>
                <ZoomRange type="range" min="0" max="100" defaultValue="54" aria-label="表示倍率" />
                <svg width="12" height="12" viewBox="0 0 12 12"><path d="M0 12L12 0M4 12l8-8M8 12l4-4" stroke="#888" /></svg>
              </Cell>
            </Status>
          </FootMain>
        </Footer>
      </Window>
    </Desktop>
  );
}
